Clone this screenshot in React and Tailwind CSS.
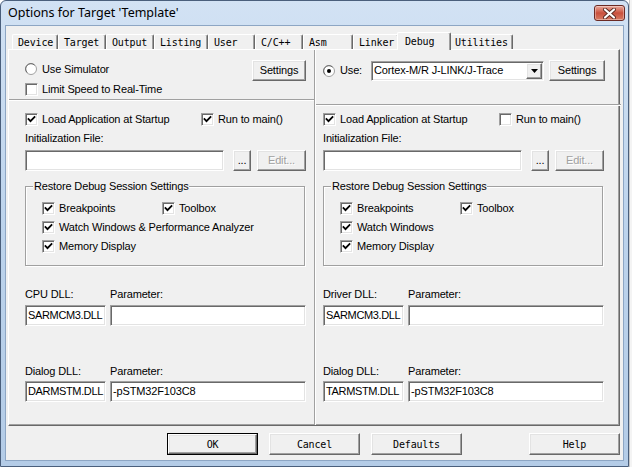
import React from 'react';

const ui = "font-['Liberation_Sans',Arial,sans-serif] text-[11px] tracking-[-0.15px] text-black";
const mono = "font-['DejaVu_Sans_Mono','Liberation_Mono',monospace] text-[10px] text-black";

const raised =
  'bg-[#f0f0f0] border border-t-white border-l-white border-r-[#696969] border-b-[#696969] shadow-[inset_-1px_-1px_0_#a0a0a0,inset_1px_1px_0_#e3e3e3]';
const sunken =
  'bg-white border border-t-[#a0a0a0] border-l-[#a0a0a0] border-r-white border-b-white shadow-[inset_1px_1px_0_#696969,inset_-1px_-1px_0_#e3e3e3]';

const TABS = [
  { label: 'Device', w: 'w-[46px]' },
  { label: 'Target', w: 'w-[48px]' },
  { label: 'Output', w: 'w-[48px]' },
  { label: 'Listing', w: 'w-[54px]' },
  { label: 'User', w: 'w-[47px]' },
  { label: 'C/C++', w: 'w-[48px]' },
  { label: 'Asm', w: 'w-[50px]' },
  { label: 'Linker', w: 'w-[46px]' },
  { label: 'Debug', w: 'w-[54px]', active: true },
  { label: 'Utilities', w: 'w-[64px]' },
];

function Check({ on = true }) {
  return (
    <div className={`w-[13px] h-[13px] shrink-0 ${sunken}`}>
      {on && (
        <svg width="11" height="11" viewBox="0 0 11 11">
          <polyline points="2.5,5 4.5,7.2 8.5,3" fill="none" stroke="#000" strokeWidth="1.8" strokeLinecap="square" />
        </svg>
      )}
    </div>
  );
}

function Radio({ on }) {
  return (
    <svg width="12" height="12" viewBox="0 0 12 12" className="shrink-0">
      <circle cx="6" cy="6" r="5.5" fill="#fff" stroke="#a0a0a0" />
      <path d="M2.2 9.6 A5 5 0 0 1 9.6 2.2" fill="none" stroke="#696969" />
      {on && <circle cx="6" cy="6" r="2" fill="#000" />}
    </svg>
  );
}

function CheckRow({ label, on = true, className = '' }) {
  return (
    <div className={`flex items-center h-[16px] gap-[4px] ${className}`}>
      <Check on={on} />
      <span className="whitespace-nowrap">{label}</span>
    </div>
  );
}

function Etched() {
  return <div className="h-[2px] border-t border-t-[#a0a0a0] border-b border-b-white" />;
}

function Field({ w, text, tight }) {
  return (
    <div
      className={`${w} h-[21px] ${sunken} flex items-center pl-[2px] overflow-hidden whitespace-nowrap ${tight ? 'tracking-[-0.35px]' : ''}`}
    >
      {text}
    </div>
  );
}

function Column({ side }) {
  const left = side === 'left';
  return (
    <div className="flex flex-col">
      {left ? (
        <div className="pl-[16px] pr-[8px] pt-[9px] flex justify-between">
          <div className="flex flex-col">
            <div className="flex items-center h-[20px] gap-[5px]">
              <Radio />
              <span>Use Simulator</span>
            </div>
            <CheckRow label="Limit Speed to Real-Time" on={false} className="h-[20px]" />
          </div>
          <div className={`mt-[1px] w-[54px] h-[21px] ${raised} flex items-center justify-center`}>Settings</div>
        </div>
      ) : (
        <div className="pl-[7px] pr-[16px] pt-[10px] flex items-center h-[31px]">
          <Radio on />
          <span className="ml-[5px]">Use:</span>
          <div className={`ml-[9px] w-[173px] h-[20px] ${sunken} flex items-center justify-between pl-[2px] pr-[1px]`}>
            <span className="whitespace-nowrap">Cortex-M/R J-LINK/J-Trace</span>
            <div className={`w-[16px] h-[16px] ${raised} flex items-center justify-center`}>
              <svg width="7" height="4" viewBox="0 0 7 4">
                <polygon points="0,0 7,0 3.5,4" fill="#000" />
              </svg>
            </div>
          </div>
          <div className={`ml-[5px] w-[56px] h-[21px] ${raised} flex items-center justify-center`}>Settings</div>
        </div>
      )}

      <div className={left ? '' : 'mt-[23px]'}>
        <Etched />
      </div>

      <div className={`flex flex-col ${left ? 'pl-[16px] pr-[8px] mt-[10px]' : 'pl-[7px] pr-[16px] mt-[5px]'}`}>
        <div className="flex items-center h-[16px]">
          <CheckRow label="Load Application at Startup" className="w-[176px]" />
          <CheckRow label="Run to main()" on={left} />
        </div>
        <div className="h-[14px] mt-[4px] flex items-center">Initialization File:</div>
        <div className="mt-[5px] flex items-center h-[21px]">
          <Field w="w-[199px]" text="" />
          <div className={`ml-[9px] w-[18px] h-[21px] ${raised} flex items-center justify-center`}>...</div>
          <div
            className={`ml-[6px] w-[49px] h-[21px] ${raised} flex items-center justify-center text-[#a0a0a0] [text-shadow:1px_1px_0_#fff]`}
          >
            Edit...
          </div>
        </div>

        <div className="relative mt-[15px] w-[280px] h-[80px] border border-[#a0a0a0] shadow-[inset_1px_1px_0_#fff,1px_1px_0_#fff] pl-[16px] pt-[13px] flex flex-col gap-[3px]">
          <div className="absolute -top-[8px] left-[7px] bg-[#f0f0f0] px-[1px] leading-[14px]">
            Restore Debug Session Settings
          </div>
          <div className="flex">
            <CheckRow label="Breakpoints" className="w-[120px]" />
            <CheckRow label="Toolbox" />
          </div>
          <CheckRow label={left ? 'Watch Windows & Performance Analyzer' : 'Watch Windows'} />
          <CheckRow label="Memory Display" />
        </div>

        <div className="mt-[21px] h-[14px] flex items-center">
          <span className="w-[85px]">{left ? 'CPU DLL:' : 'Driver DLL:'}</span>
          <span>Parameter:</span>
        </div>
        <div className="mt-[4px] flex gap-[4px]">
          <Field w="w-[81px]" text="SARMCM3.DLL" tight />
          <Field w="w-[196px]" text="" />
        </div>

        <div className="mt-[38px] h-[14px] flex items-center">
          <span className="w-[85px]">Dialog DLL:</span>
          <span>Parameter:</span>
        </div>
        <div className="mt-[3px] flex gap-[4px]">
          <Field w="w-[81px]" text={left ? 'DARMSTM.DLL' : 'TARMSTM.DLL'} tight />
          <Field w="w-[196px]" text="-pSTM32F103C8" />
        </div>
      </div>
    </div>
  );
}

function Tab({ label, w, active }) {
  if (active) {
    return (
      <div
        className={`${w} -mx-[2px] h-[18px] -mb-[1px] relative z-10 bg-[#f0f0f0] border-t border-l border-t-white border-l-white border-r border-r-[#696969] shadow-[inset_-1px_0_0_#a0a0a0] rounded-t-[2px] pl-[7px] pt-[1px] ${mono}`}
      >
        {label}
      </div>
    );
  }
  return (
    <div
      className={`${w} h-[15px] bg-[#f0f0f0] border-t border-l border-t-white border-l-white border-r border-r-[#696969] shadow-[inset_-1px_0_0_#a0a0a0] rounded-t-[2px] pl-[5px] flex items-center ${mono}`}
    >
      {label}
    </div>
  );
}

function BottomButton({ label, def }) {
  const inner = (
    <div className={`w-full h-full ${raised} flex items-center justify-center ${mono}`}>{label}</div>
  );
  if (def) {
    return <div className="w-[91px] h-[22px] border border-black">{inner}</div>;
  }
  return <div className="w-[91px] h-[22px]">{inner}</div>;
}

export default function App() {
  return (
    <div className="w-[632px] h-[467px] flex bg-white overflow-hidden">
      <div className="w-[629px] h-[467px] flex flex-col border border-[#4a5f7c] rounded-t-[6px] bg-gradient-to-b from-[#d2e2f4] via-[#bcd3ec] to-[#b4cce7]">
        {/* title bar */}
        <div className="h-[24px] flex items-start justify-between pl-[7px] pr-[3px]">
          <span className="mt-[3px] font-['Noto_Sans','Liberation_Sans',sans-serif] text-[12.5px] text-black whitespace-nowrap">
            Options for Target 'Template'
          </span>
          <div className="mt-[4px] w-[31px] h-[16px] rounded-[3px] border border-[#6b2a24] bg-gradient-to-b from-[#e9a99c] via-[#c9503d] to-[#d77a63] flex items-center justify-center shadow-[inset_0_0_0_1px_rgba(255,255,255,0.35)]">
            <svg width="13" height="11" viewBox="0 0 13 11">
              <path d="M2 1.5 L11 9.5 M11 1.5 L2 9.5" stroke="#5a2a22" strokeWidth="4" strokeLinecap="round" />
              <path d="M2 1.5 L11 9.5 M11 1.5 L2 9.5" stroke="#fff" strokeWidth="2.2" strokeLinecap="round" />
            </svg>
          </div>
        </div>

        {/* client area */}
        <div className={`mx-[4px] mb-[5px] flex-1 bg-[#f0f0f0] border border-[#8da6c4] flex flex-col pl-[2px] ${ui}`}>
          <div className="mt-[6px] ml-[4px] h-[17px] flex items-end">
            {TABS.map((t) => (
              <Tab key={t.label} {...t} />
            ))}
          </div>

          <div className="w-[612px] h-[377px] border border-t-white border-l-white border-r-[#696969] border-b-[#696969] shadow-[inset_-1px_-1px_0_#a0a0a0] flex">
            <div className="w-[305px]">
              <Column side="left" />
            </div>
            <div className="w-[2px] border-l border-l-[#a0a0a0] border-r border-r-white" />
            <div className="flex-1">
              <Column side="right" />
            </div>
          </div>

          <div className="mt-[7px] w-[612px] flex justify-end">
            <div className="flex gap-[11px]">
              <BottomButton label="OK" def />
              <BottomButton label="Cancel" />
              <BottomButton label="Defaults" />
            </div>
            <div className="ml-[67px]">
              <BottomButton label="Help" />
            </div>
          </div>
        </div>
      </div>
      <div className="flex-1 bg-[#f4f4f4] border-l border-l-[#c8c8c8]" />
    </div>
  );
}
